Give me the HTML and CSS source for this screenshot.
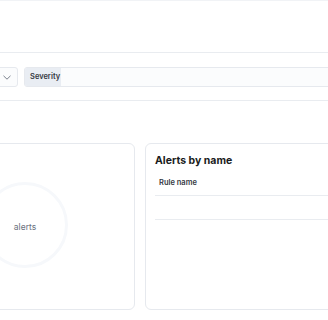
FILE: index.html
```html
<!DOCTYPE html>
<html>
<head>
<meta charset="utf-8">
<link rel="stylesheet" href="styles.css">
</head>
<body>
<div class="page">
  <div class="top"></div>
  <div class="filters">
    <div class="filter-row">
      <div class="dropdown">
        <svg class="chev" width="8" height="5" viewBox="0 0 8 5"><path d="M0.5 0.8 L4 4.2 L7.5 0.8" fill="none" stroke="#7a808c" stroke-width="1"/></svg>
      </div>
      <div class="field">
        <span class="field-label">Severity</span>
      </div>
    </div>
  </div>
  <div class="cards">
    <div class="card card-left">
      <div class="donut">
        <span class="donut-label">alerts</span>
      </div>
    </div>
    <div class="card card-right">
      <div class="card-title">Alerts by name</div>
      <div class="table">
        <div class="th">Rule name</div>
        <div class="tr"></div>
      </div>
    </div>
  </div>
</div>
</body>
</html>
```
FILE: styles.css
```css
html, body {
  margin: 0;
  padding: 0;
  background: #ffffff;
  overflow: hidden;
  width: 328px;
  height: 320px;
  font-family: Inter, "Liberation Sans", sans-serif;
  color: #343741;
}
.page {
  width: 328px;
}
.top {
  height: 51px;
  border-top: 1px solid #f1f3f6;
  border-bottom: 1px solid #e9ecf0;
}
.filters {
  padding: 14px 0 13px;
  border-bottom: 1px solid #e9ecf0;
}
.filter-row {
  display: flex;
  gap: 6px;
  height: 20px;
  margin-left: -28px;
  margin-right: -10px;
}
.dropdown {
  width: 38px;
  height: 18px;
  border: 1px solid #e6e9ee;
  border-radius: 3px;
  background: #fbfcfd;
  display: flex;
  align-items: center;
  justify-content: flex-end;
  padding-right: 6px;
  box-sizing: content-box;
}
.chev { display: block; }
.field {
  flex: 1;
  height: 18px;
  border: 1px solid #e6e9ee;
  border-radius: 3px;
  background: #fbfcfd;
  display: flex;
  overflow: hidden;
}
.field-label {
  background: #e9edf3;
  padding: 0 5px;
  width: 26px;
  font-size: 7.5px;
  font-weight: 600;
  line-height: 18px;
  color: #343741;
  white-space: nowrap;
}
.cards {
  display: flex;
  gap: 10px;
  margin-top: 42px;
  margin-left: -100px;
  margin-right: -20px;
  height: 167px;
}
.card {
  border: 1px solid #e6e9ee;
  border-radius: 6px;
  background: #fff;
  box-sizing: border-box;
}
.card-left {
  width: 235px;
  display: flex;
  align-items: center;
  padding-left: 81px;
}
.donut {
  width: 80px;
  height: 80px;
  border: 3px solid #f6f8fb;
  border-radius: 50%;
  display: flex;
  align-items: center;
  justify-content: center;
  margin-top: -3px;
}
.donut-label {
  font-size: 8.5px;
  color: #69707d;
  margin-top: 3px;
}
.card-right {
  flex: 1;
  padding: 9px 0 0 9px;
}
.card-title {
  font-size: 10.5px;
  font-weight: 700;
  color: #1a1c21;
  line-height: 16px;
}
.table {
  margin-top: 8px;
}
.th {
  font-size: 7.5px;
  font-weight: 600;
  color: #343741;
  padding: 0 4px;
  height: 18px;
  line-height: 12px;
  border-bottom: 1px solid #e9ecf0;
}
.tr {
  height: 23px;
  border-bottom: 1px solid #e9ecf0;
}
```
